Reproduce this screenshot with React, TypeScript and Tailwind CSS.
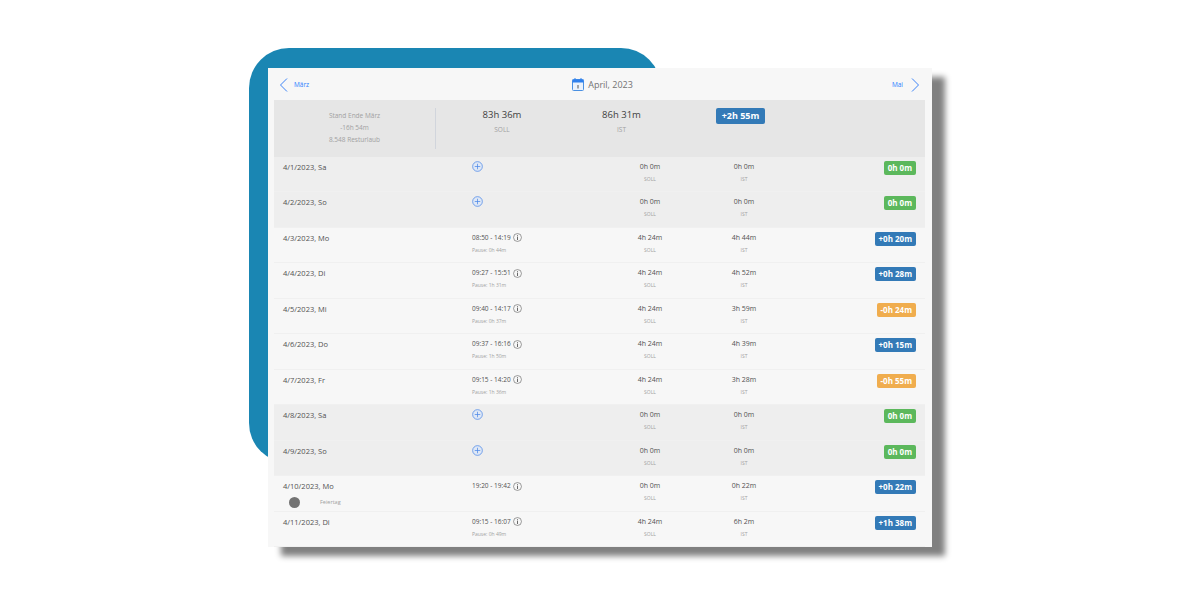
const days = [
  { d: "4/1/2023, Sa", off: true, soll: "0h 0m", ist: "0h 0m", b: "0h 0m", c: "g" },
  { d: "4/2/2023, So", off: true, soll: "0h 0m", ist: "0h 0m", b: "0h 0m", c: "g" },
  { d: "4/3/2023, Mo", t: "08:50 - 14:19", p: "Pause: 0h 44m", soll: "4h 24m", ist: "4h 44m", b: "+0h 20m", c: "b" },
  { d: "4/4/2023, Di", t: "09:27 - 15:51", p: "Pause: 1h 31m", soll: "4h 24m", ist: "4h 52m", b: "+0h 28m", c: "b" },
  { d: "4/5/2023, Mi", t: "09:40 - 14:17", p: "Pause: 0h 37m", soll: "4h 24m", ist: "3h 59m", b: "-0h 24m", c: "o" },
  { d: "4/6/2023, Do", t: "09:37 - 16:16", p: "Pause: 1h 50m", soll: "4h 24m", ist: "4h 39m", b: "+0h 15m", c: "b" },
  { d: "4/7/2023, Fr", t: "09:15 - 14:20", p: "Pause: 1h 36m", soll: "4h 24m", ist: "3h 28m", b: "-0h 55m", c: "o" },
  { d: "4/8/2023, Sa", off: true, soll: "0h 0m", ist: "0h 0m", b: "0h 0m", c: "g" },
  { d: "4/9/2023, So", off: true, soll: "0h 0m", ist: "0h 0m", b: "0h 0m", c: "g" },
  { d: "4/10/2023, Mo", t: "19:20 - 19:42", hol: true, soll: "0h 0m", ist: "0h 22m", b: "+0h 22m", c: "b" },
  { d: "4/11/2023, Di", t: "09:15 - 16:07", p: "Pause: 0h 49m", soll: "4h 24m", ist: "6h 2m", b: "+1h 38m", c: "b" },
];

const badge: Record<string, string> = {
  g: "bg-[#5cb85c]",
  b: "bg-[#337ab7]",
  o: "bg-[#f0ad4e]",
};

function Info() {
  return (
    <svg width="9" height="9" viewBox="0 0 10 10" fill="none" stroke="#666" strokeWidth="0.7">
      <circle cx="5" cy="5" r="4.4" />
      <path d="M5 2.2v.9M5 4v3.8" strokeWidth="1.1" />
    </svg>
  );
}

function Plus() {
  return (
    <svg width="11" height="11" viewBox="0 0 12 12" fill="none" stroke="#4a86e8" strokeWidth="0.8">
      <circle cx="6" cy="6" r="5.3" fill="#dfe8f6" />
      <path d="M6 3v6M3 6h6" />
    </svg>
  );
}

function Calendar() {
  return (
    <svg width="12" height="13" viewBox="0 0 12 13" className="shrink-0">
      <rect x="0.5" y="1.5" width="11" height="11" rx="1" fill="#eaf2fd" stroke="#4a90e2" />
      <rect x="0.5" y="1.5" width="11" height="3" fill="#2f80ed" />
      <rect x="2.5" y="0" width="1" height="2" fill="#2f80ed" />
      <rect x="8.5" y="0" width="1" height="2" fill="#2f80ed" />
      <rect x="5.5" y="7" width="1" height="3.5" fill="#555" />
    </svg>
  );
}

function Chevron({ flip }: { flip?: boolean }) {
  return (
    <svg width="8" height="14" viewBox="0 0 8 14" fill="none" stroke="#3b82f6" strokeWidth="1">
      <path d={flip ? "M1 0.5 7.5 7 1 13.5" : "M7 0.5 0.5 7 7 13.5"} />
    </svg>
  );
}

export default function App() {
  return (
    <div className="relative h-[600px] w-[1200px] overflow-hidden bg-white pl-[268px] pt-[68px] font-['Open_Sans',sans-serif]">
      <div className="absolute left-[249px] top-12 h-[415px] w-[412px] rounded-[40px] bg-[#1a86b3]" />
      <div className="relative flex h-[479px] w-[664px] flex-col bg-[#f7f7f7] pl-1.5 pr-[7px] shadow-[13px_9px_6px_#808080]">
        <div className="flex h-8 items-center justify-between px-1.5 pt-0.5">
          <div className="flex items-center gap-1.5 text-[6.5px] text-blue-500">
            <Chevron />
            <span>März</span>
          </div>
          <div className="ml-1 flex items-center gap-1 text-[9px] text-neutral-500">
            <Calendar />
            <span>April, 2023</span>
          </div>
          <div className="flex items-center gap-2 text-[6.5px] text-blue-500">
            <span>Mai</span>
            <Chevron flip />
          </div>
        </div>

        <div className="flex h-[57px] bg-[#e6e6e6]">
          <div className="my-2 flex w-[162px] flex-col items-center border-r border-gray-300 pt-0.5 text-[6.5px] leading-3 text-neutral-400">
            <span>Stand Ende März</span>
            <span>-16h 54m</span>
            <span>8.548 Resturlaub</span>
          </div>
          <div className="flex w-[132px] flex-col items-center pt-2">
            <span className="text-[9.5px] leading-3.5 text-neutral-700">83h 36m</span>
            <span className="mt-0.5 text-[6.5px] leading-3 text-neutral-400">SOLL</span>
          </div>
          <div className="flex w-[107px] flex-col items-center pt-2">
            <span className="text-[9.5px] leading-3.5 text-neutral-700">86h 31m</span>
            <span className="mt-0.5 text-[6.5px] leading-3 text-neutral-400">IST</span>
          </div>
          <div className="flex w-[131px] justify-center pt-2">
            <span className="h-4 rounded-xs bg-[#337ab7] px-1.5 text-[9px] font-bold leading-4 text-white">+2h 55m</span>
          </div>
        </div>

        {days.map((r) => (
          <div
            key={r.d}
            className={`flex h-[35.5px] border-b border-[#f0f0f0] pl-[9px] pr-[9px] pt-1 ${r.off ? "bg-[#eeeeee]" : ""}`}
          >
            <div className="w-[189px] text-[7.5px] leading-3 text-neutral-600">
              <div>{r.d}</div>
              {r.hol && (
                <div className="mt-1 flex items-center text-[5.5px] text-neutral-400">
                  <span className="ml-1.5 mr-5 size-[11px] rounded-full bg-neutral-500" />
                  Feiertag
                </div>
              )}
            </div>
            <div className="w-[131px]">
              {r.off ? (
                <Plus />
              ) : (
                <>
                  <div className="flex items-center gap-0.5 text-[6.5px] leading-3 text-neutral-600">
                    {r.t}
                    <Info />
                  </div>
                  {r.p && <div className="text-[5px] leading-3 text-neutral-400">{r.p}</div>}
                </>
              )}
            </div>
            <div className="flex w-[94px] flex-col items-center">
              <span className="text-[7px] leading-3 text-neutral-600">{r.soll}</span>
              <span className="text-[5px] leading-3 text-neutral-400">SOLL</span>
            </div>
            <div className="flex w-[94px] flex-col items-center">
              <span className="text-[7px] leading-3 text-neutral-600">{r.ist}</span>
              <span className="text-[5px] leading-3 text-neutral-400">IST</span>
            </div>
            <div className="flex flex-1 items-start justify-end">
              <span className={`rounded-xs px-1 text-[8px] font-bold leading-[14px] text-white ${badge[r.c]}`}>{r.b}</span>
            </div>
          </div>
        ))}
      </div>
    </div>
  );
}
